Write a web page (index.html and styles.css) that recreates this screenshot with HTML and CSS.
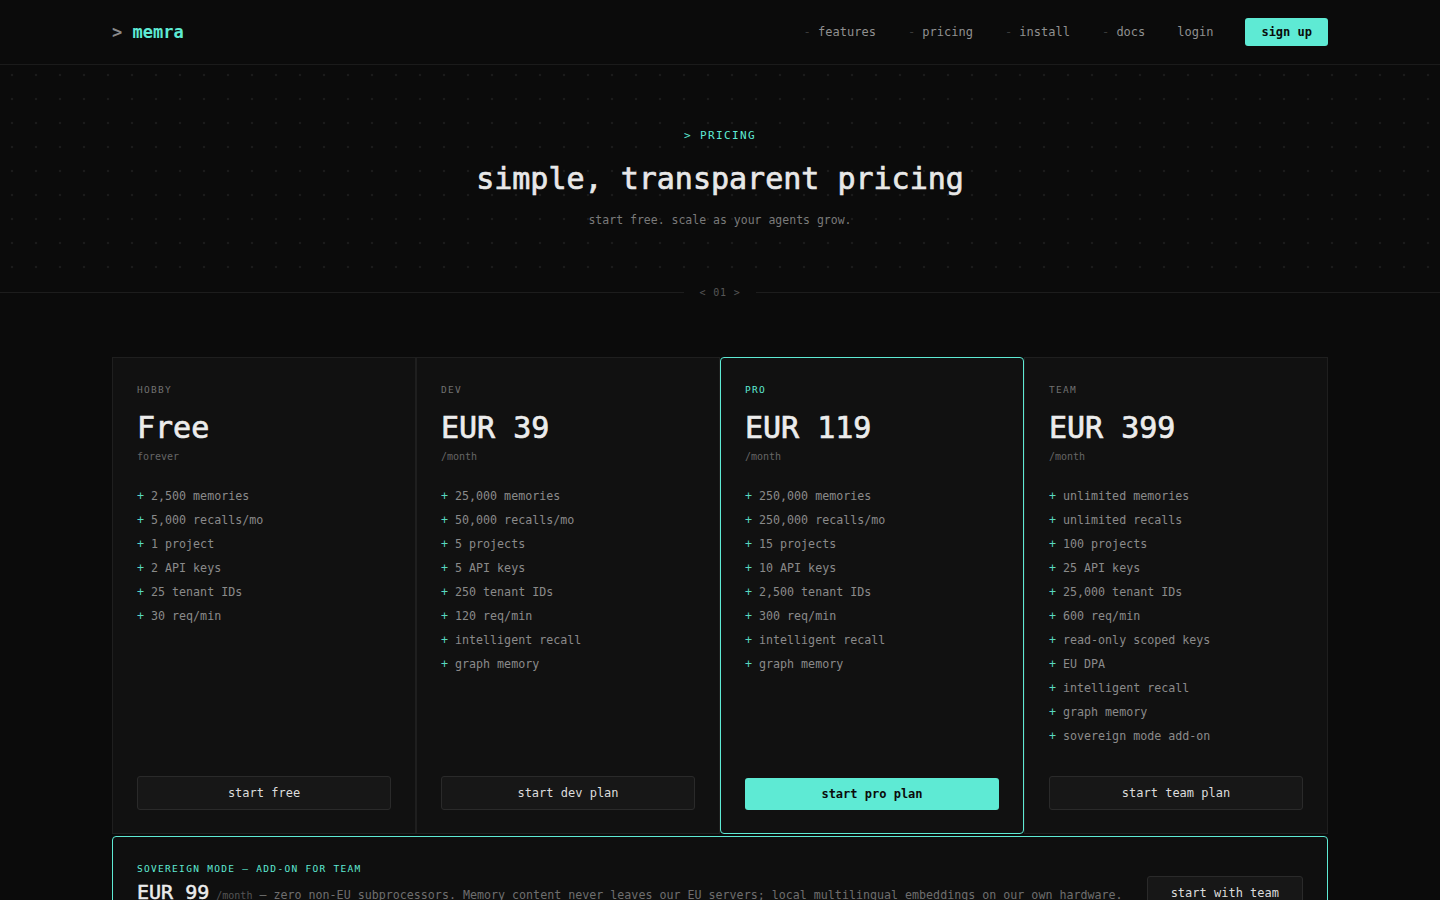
FILE: index.html
```html
<!DOCTYPE html>
<html lang="en">
<head>
<meta charset="utf-8">
<title>memra — pricing</title>
<link rel="stylesheet" href="styles.css">
</head>
<body>
<header class="site-header">
  <div class="container header-inner">
    <a class="logo" href="#"><span class="logo-caret">&gt;</span> <span class="logo-name">memra</span></a>
    <nav class="nav">
      <a class="nav-link" href="#"><span class="nav-dash">-</span> features</a>
      <a class="nav-link" href="#"><span class="nav-dash">-</span> pricing</a>
      <a class="nav-link" href="#"><span class="nav-dash">-</span> install</a>
      <a class="nav-link" href="#"><span class="nav-dash">-</span> docs</a>
      <a class="nav-link" href="#">login</a>
      <a class="btn-signup" href="#">sign up</a>
    </nav>
  </div>
</header>

<section class="hero">
  <p class="eyebrow">&gt; PRICING</p>
  <h1 class="hero-title">simple, transparent pricing</h1>
  <p class="hero-sub">start free. scale as your agents grow.</p>
</section>

<div class="divider">
  <span class="divider-line"></span>
  <span class="divider-label">&lt; 01 &gt;</span>
  <span class="divider-line"></span>
</div>

<main class="container pricing">
  <div class="plans">
    <article class="plan">
      <p class="plan-label">HOBBY</p>
      <p class="plan-price">Free</p>
      <p class="plan-period">forever</p>
      <ul class="plan-features">
        <li>2,500 memories</li>
        <li>5,000 recalls/mo</li>
        <li>1 project</li>
        <li>2 API keys</li>
        <li>25 tenant IDs</li>
        <li>30 req/min</li>
      </ul>
      <a class="plan-btn" href="#">start free</a>
    </article>

    <article class="plan">
      <p class="plan-label">DEV</p>
      <p class="plan-price">EUR 39</p>
      <p class="plan-period">/month</p>
      <ul class="plan-features">
        <li>25,000 memories</li>
        <li>50,000 recalls/mo</li>
        <li>5 projects</li>
        <li>5 API keys</li>
        <li>250 tenant IDs</li>
        <li>120 req/min</li>
        <li>intelligent recall</li>
        <li>graph memory</li>
      </ul>
      <a class="plan-btn" href="#">start dev plan</a>
    </article>

    <article class="plan plan--featured">
      <p class="plan-label plan-label--accent">PRO</p>
      <p class="plan-price">EUR 119</p>
      <p class="plan-period">/month</p>
      <ul class="plan-features">
        <li>250,000 memories</li>
        <li>250,000 recalls/mo</li>
        <li>15 projects</li>
        <li>10 API keys</li>
        <li>2,500 tenant IDs</li>
        <li>300 req/min</li>
        <li>intelligent recall</li>
        <li>graph memory</li>
      </ul>
      <a class="plan-btn plan-btn--primary" href="#">start pro plan</a>
    </article>

    <article class="plan">
      <p class="plan-label">TEAM</p>
      <p class="plan-price">EUR 399</p>
      <p class="plan-period">/month</p>
      <ul class="plan-features">
        <li>unlimited memories</li>
        <li>unlimited recalls</li>
        <li>100 projects</li>
        <li>25 API keys</li>
        <li>25,000 tenant IDs</li>
        <li>600 req/min</li>
        <li>read-only scoped keys</li>
        <li>EU DPA</li>
        <li>intelligent recall</li>
        <li>graph memory</li>
        <li>sovereign mode add-on</li>
      </ul>
      <a class="plan-btn" href="#">start team plan</a>
    </article>
  </div>

  <section class="sovereign">
    <div class="sovereign-body">
      <p class="plan-label plan-label--accent">SOVEREIGN MODE — ADD-ON FOR TEAM</p>
      <p class="sovereign-text"><span class="sovereign-price">EUR 99</span> <span class="sovereign-period">/month</span> — zero non-EU subprocessors. Memory content never leaves our EU servers; local multilingual embeddings on our own hardware.</p>
    </div>
    <a class="plan-btn sovereign-btn" href="#">start with team</a>
  </section>
</main>
</body>
</html>
```

FILE: styles.css
```css
* {
  box-sizing: border-box;
}

html,
body {
  margin: 0;
  padding: 0;
}

body {
  background: #0b0b0b;
  color: #e6e6e6;
  font-family: "DejaVu Sans Mono", "Liberation Mono", monospace;
}

a {
  text-decoration: none;
  color: inherit;
}

p {
  margin: 0;
}

.container {
  width: 1216px;
  margin: 0 auto;
}

/* header */
.site-header {
  border-bottom: 1px solid #1b1b1b;
}

.header-inner {
  height: 64px;
  display: flex;
  align-items: center;
  justify-content: space-between;
}

.logo {
  font-size: 17px;
  font-weight: 700;
  line-height: 20px;
}

.logo-caret {
  color: #8a8a8a;
}

.logo-name {
  color: #5eead4;
}

.nav {
  display: flex;
  align-items: center;
  gap: 32px;
  font-size: 12px;
  line-height: 16px;
}

.nav-link {
  color: #909090;
}

.nav-dash {
  color: #3a3a3a;
}

.btn-signup {
  display: block;
  height: 28px;
  line-height: 28px;
  padding: 0 16px;
  border-radius: 3px;
  background: #5eead4;
  color: #0a0a0a;
  font-weight: 700;
}

/* hero */
.hero {
  text-align: center;
  padding: 63px 0 56px;
  background-image: radial-gradient(circle, #1b1b1b 1px, transparent 1.6px);
  background-size: 24px 24px;
  background-position: 0 -2px;
}

.eyebrow {
  font-size: 11px;
  line-height: 16px;
  letter-spacing: 1.4px;
  color: #5eead4;
}

.hero-title {
  margin: 15px 0 0;
  font-size: 30px;
  line-height: 40px;
  font-weight: 400;
  -webkit-text-stroke: 0.7px currentColor;
  color: #e8e8e8;
}

.hero-sub {
  margin-top: 12px;
  font-size: 11.5px;
  line-height: 18px;
  color: #7a7a7a;
}

/* divider */
.divider {
  display: flex;
  align-items: center;
  height: 14px;
}

.divider-line {
  flex: 1;
  height: 1px;
  background: #1d1d1d;
}

.divider-label {
  padding: 1px 16px 0;
  font-size: 10px;
  line-height: 14px;
  letter-spacing: 0.8px;
  color: #565656;
}

/* pricing */
.pricing {
  padding-top: 58px;
}

.plans {
  display: grid;
  grid-template-columns: repeat(4, 1fr);
}

.plan {
  display: flex;
  flex-direction: column;
  background: #111111;
  border: 1px solid #1f1f1f;
  padding: 25px 24px 23px;
}

.plan--featured {
  border-color: #5eead4;
  border-radius: 4px;
}

.plan-label {
  font-size: 9.5px;
  line-height: 14px;
  letter-spacing: 1.3px;
  color: #707070;
  margin-bottom: 12px;
}

.plan-label--accent {
  color: #5eead4;
}

.plan-price {
  font-size: 30px;
  line-height: 38px;
  font-weight: 400;
  -webkit-text-stroke: 0.7px currentColor;
  color: #ececec;
}

.plan-period {
  margin-top: 3px;
  font-size: 10px;
  line-height: 14px;
  color: #666;
}

.plan-features {
  list-style: none;
  margin: 20px 0 28px;
  padding: 0;
  font-size: 11.67px;
  line-height: 24px;
  color: #8a8a8a;
}

.plan-features li::before {
  content: "+";
  display: inline-block;
  width: 14px;
  color: #58d8c0;
}

.plan-btn {
  display: block;
  margin-top: auto;
  height: 34px;
  line-height: 32px;
  border: 1px solid #2a2a2a;
  border-radius: 3px;
  background: #171717;
  color: #dcdcdc;
  text-align: center;
  font-size: 12px;
}

.plan-btn--primary {
  height: 32px;
  line-height: 32px;
  border: none;
  background: #5eead4;
  color: #0b0b0b;
  font-weight: 700;
}

/* sovereign */
.sovereign {
  margin-top: 2px;
  display: flex;
  justify-content: space-between;
  align-items: flex-start;
  gap: 24px;
  padding: 25px 24px 24px;
  border: 1px solid #5eead4;
  border-radius: 4px;
  background: #0f0f0f;
}

.sovereign .plan-label {
  margin-bottom: 4px;
}

.sovereign-text {
  font-size: 11.67px;
  line-height: 24px;
  color: #6e6e6e;
}

.sovereign-price {
  font-size: 20px;
  font-weight: 400;
  -webkit-text-stroke: 0.5px currentColor;
  color: #ececec;
}

.sovereign-period {
  font-size: 10px;
  color: #555;
}

.sovereign-btn {
  flex: none;
  margin-top: 14px;
  padding: 0 23px;
}
```
